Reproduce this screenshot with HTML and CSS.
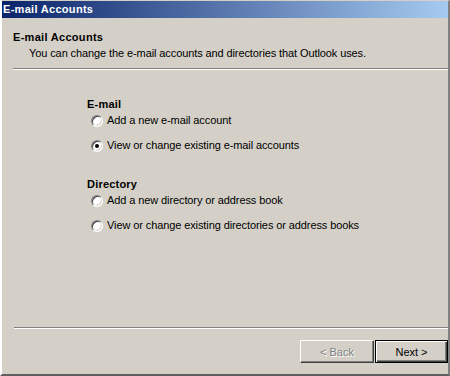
FILE: index.html
```html
<!DOCTYPE html>
<html lang="en">
<head>
    <meta charset="UTF-8">
    <title>E-mail Accounts</title>
    <link rel="stylesheet" href="styles.css">
</head>
<body>
    <div class="window">
        <div class="titlebar">E-mail Accounts</div>

        <!-- Cabeçalho do assistente -->
        <div class="wiz-header">
            <h1>E-mail Accounts</h1>
            <p>You can change the e-mail accounts and directories that Outlook uses.</p>
        </div>
        <div class="etched header-line"></div>

        <div class="wiz-body">
            <div class="group">
                <h2>E-mail</h2>
                <label class="option"><span class="radio"></span>Add a new e-mail account</label>
                <label class="option"><span class="radio checked"></span>View or change existing e-mail accounts</label>
            </div>
            <div class="group">
                <h2>Directory</h2>
                <label class="option"><span class="radio"></span>Add a new directory or address book</label>
                <label class="option"><span class="radio"></span>View or change existing directories or address books</label>
            </div>
        </div>

        <div class="etched footer-line"></div>
        <div class="buttons">
            <button class="btn" disabled>&lt; Back</button>
            <button class="btn btn-default">Next &gt;</button>
        </div>
    </div>
</body>
</html>
```

FILE: styles.css
```css
body {
    margin: 0;
    font-family: 'Liberation Sans', Arial, sans-serif;
    font-size: 11px;
    line-height: 13px;
    letter-spacing: -0.1px;
    color: #000;
    background: #d4d0c8;
}

.window {
    width: 450px;
    height: 376px;
    box-sizing: border-box;
    display: flex;
    flex-direction: column;
    background: #d4d0c8;
    border-top: 1px solid #d4d0c8;
    border-left: 2px solid #fff;
    border-right: 2px solid #808080;
    border-bottom: 2px solid #5e5e5e;
    overflow: hidden;
}

.titlebar {
    height: 17px;
    line-height: 17px;
    padding-left: 1px;
    color: #fff;
    font-weight: bold;
    letter-spacing: 0.3px;
    background: linear-gradient(to right, #0a246a 0%, #a6caf0 100%);
}

.wiz-header {
    padding: 13px 0 0 11px;
}

.wiz-header h1 {
    margin: 0;
    font-size: 11px;
    font-weight: bold;
    letter-spacing: 0.3px;
}

.wiz-header p {
    margin: 3px 0 0 16px;
}

.etched {
    height: 0;
    border-top: 1px solid #808080;
    border-bottom: 1px solid #fff;
}

.header-line {
    margin: 8px 0 0 11px;
}

.wiz-body {
    flex: 1;
    padding: 28px 0 0 85px;
}

.group + .group {
    margin-top: 26px;
}

.group h2 {
    margin: 0;
    font-size: 11px;
    font-weight: bold;
    letter-spacing: 0.2px;
}

.option {
    display: flex;
    align-items: center;
    margin: 3px 0 0 4px;
    height: 13px;
}

.option + .option {
    margin-top: 12px;
}

.radio {
    position: relative;
    width: 10px;
    height: 10px;
    margin-right: 4px;
    border-radius: 50%;
    border: 1px solid;
    border-color: #808080 #fff #fff #808080;
    background: #fff;
    box-shadow: inset 1px 1px 0 #404040, inset -1px -1px 0 #d4d0c8;
}

.radio.checked::after {
    content: "";
    position: absolute;
    left: 3px;
    top: 3px;
    width: 4px;
    height: 4px;
    border-radius: 50%;
    background: #000;
}

.footer-line {
    margin-left: 12px;
}

.buttons {
    display: flex;
    justify-content: flex-end;
    margin: 11px 0 11px;
}

.btn {
    width: 74px;
    height: 23px;
    padding: 0;
    font-family: inherit;
    font-size: 11px;
    color: #000;
    background: #d4d0c8;
    border: 1px solid;
    border-color: #fff #404040 #404040 #fff;
    box-shadow: inset -1px -1px 0 #808080;
    border-radius: 0;
}

.btn:disabled {
    color: #808080;
    text-shadow: 1px 1px 0 #fff;
    margin-right: 1px;
}

.btn-default {
    width: 73px;
    border: 1px solid #000;
    box-shadow: inset 1px 1px 0 #fff, inset -1px -1px 0 #404040, inset -2px -2px 0 #808080;
}
```
